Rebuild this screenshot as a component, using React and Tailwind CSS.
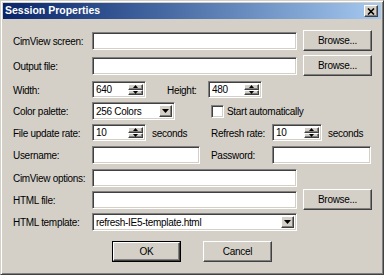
import React from "react";

const sunken =
  "border border-t-[#808080] border-l-[#808080] border-b-white border-r-white shadow-[inset_1px_1px_0_#404040,inset_-1px_-1px_0_#d4d0c8]";
const raised =
  "border border-t-white border-l-white border-b-[#404040] border-r-[#404040] shadow-[inset_-1px_-1px_0_#808080] bg-[#d4d0c8]";

function Label({ children, w = "w-[79px]" }) {
  return <div className={`${w} h-[18px] shrink-0 flex items-center`}>{children}</div>;
}

function TextBox({ w, value = "" }) {
  return (
    <div className={`${w} h-[18px] shrink-0 bg-white ${sunken} flex items-center pl-[3px]`}>
      {value}
    </div>
  );
}

function Spinner({ w, value }) {
  return (
    <div className={`${w} h-[17px] shrink-0 bg-white ${sunken} flex items-stretch p-[2px]`}>
      <div className="flex-1 flex items-center pl-[1px]">{value}</div>
      <div className="w-[15px] flex flex-col">
        <div className={`flex-1 ${raised} flex items-center justify-center`}>
          <svg width="5" height="3" viewBox="0 0 5 3">
            <path d="M2.5 0 L5 3 L0 3 Z" fill="#000" />
          </svg>
        </div>
        <div className={`flex-1 ${raised} flex items-center justify-center`}>
          <svg width="5" height="3" viewBox="0 0 5 3">
            <path d="M0 0 L5 0 L2.5 3 Z" fill="#000" />
          </svg>
        </div>
      </div>
    </div>
  );
}

function Combo({ w, value }) {
  return (
    <div className={`${w} h-[18px] shrink-0 bg-white ${sunken} flex items-stretch p-[2px]`}>
      <div className="flex-1 flex items-center pl-[1px]">{value}</div>
      <div className={`w-[13px] ${raised} flex items-center justify-center`}>
        <svg width="7" height="4" viewBox="0 0 7 4">
          <path d="M0 0 L7 0 L3.5 4 Z" fill="#000" />
        </svg>
      </div>
    </div>
  );
}

function Button({ children, isDefault, className = "" }) {
  if (isDefault) {
    return (
      <div className={`w-[69px] h-[21px] shrink-0 border border-black ${className}`}>
        <div className={`w-full h-full ${raised} flex items-center justify-center`}>{children}</div>
      </div>
    );
  }
  return (
    <div className={`w-[69px] h-[21px] shrink-0 ${raised} flex items-center justify-center ${className}`}>
      {children}
    </div>
  );
}

export default function App() {
  return (
    <div
      className="w-[384px] h-[275px] bg-[#d4d0c8] border border-t-[#d4d0c8] border-l-[#d4d0c8] border-b-[#404040] border-r-[#404040] shadow-[inset_1px_1px_0_#fff,inset_-1px_-1px_0_#808080] p-[2px] flex flex-col text-black text-[10px] tracking-[-0.3px]"
      style={{ fontFamily: '"Liberation Sans", Arial, sans-serif' }}
    >
      {/* title bar */}
      <div className="h-[16px] shrink-0 bg-linear-to-r from-[#0a246a] to-[#a6caf0] flex items-center justify-between pl-[2px] pr-[3px]">
        <span className="text-white font-bold text-[10.5px] tracking-normal">Session Properties</span>
        <div className={`w-[14px] h-[12px] ${raised} flex items-center justify-center`}>
          <svg width="8" height="7" viewBox="0 0 8 7">
            <path d="M1 0.5 L7 6.5 M7 0.5 L1 6.5" stroke="#000" strokeWidth="1.6" />
          </svg>
        </div>
      </div>

      <div className="flex flex-col pl-[10px] pt-[13px]">
        <div className="flex items-start h-[25px]">
          <Label>CimView screen:</Label>
          <TextBox w="w-[205px]" />
          <Button className="ml-[6px] -mt-[2px]">Browse...</Button>
        </div>
        <div className="flex items-start h-[24px]">
          <Label>Output file:</Label>
          <TextBox w="w-[205px]" />
          <Button className="ml-[6px] -mt-[2px]">Browse...</Button>
        </div>
        <div className="flex items-start h-[21px]">
          <Label>Width:</Label>
          <Spinner w="w-[54px]" value="640" />
          <Label w="w-[41px] ml-[21px]">Height:</Label>
          <Spinner w="w-[54px]" value="480" />
        </div>
        <div className="flex items-start h-[22px]">
          <Label>Color palette:</Label>
          <Combo w="w-[83px]" value="256 Colors" />
          <div className={`w-[13px] h-[13px] ml-[36px] mt-[3px] bg-white ${sunken}`} />
          <div className="h-[18px] flex items-center ml-[3px]">Start automatically</div>
        </div>
        <div className="flex items-start h-[22px]">
          <Label>File update rate:</Label>
          <Spinner w="w-[54px]" value="10" />
          <Label w="w-[65px] pl-[6px]">seconds</Label>
          <Label w="w-[61px]">Refresh rate:</Label>
          <Spinner w="w-[50px]" value="10" />
          <Label w="w-[50px] pl-[6px]">seconds</Label>
        </div>
        <div className="flex items-start h-[23px]">
          <Label>Username:</Label>
          <TextBox w="w-[108px]" />
          <Label w="w-[61px] ml-[11px]">Password:</Label>
          <TextBox w="w-[99px]" />
        </div>
        <div className="flex items-start h-[22px]">
          <Label>CimView options:</Label>
          <TextBox w="w-[205px]" />
        </div>
        <div className="flex items-start h-[22px]">
          <Label>HTML file:</Label>
          <TextBox w="w-[205px]" />
          <Button className="ml-[6px] -mt-[2px]">Browse...</Button>
        </div>
        <div className="flex items-start h-[18px]">
          <Label>HTML template:</Label>
          <Combo w="w-[205px]" value="refresh-IE5-template.html" />
        </div>
        <div className="flex items-start mt-[10px] pl-[99px]">
          <Button isDefault>OK</Button>
          <Button className="ml-[22px]">Cancel</Button>
        </div>
      </div>
    </div>
  );
}
